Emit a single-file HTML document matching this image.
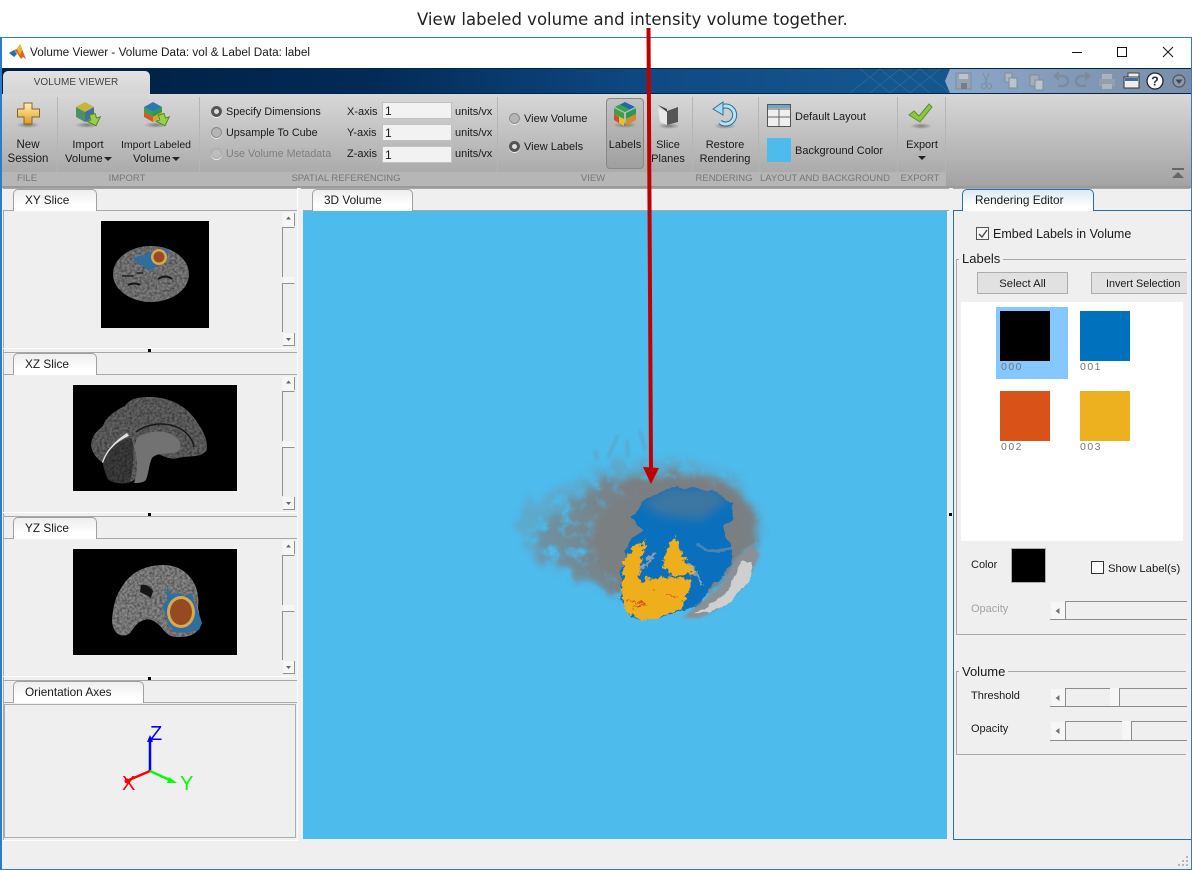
<!DOCTYPE html>
<html><head><meta charset="utf-8"><style>
html,body{margin:0;padding:0;background:#fff}
#p{position:relative;width:1192px;height:870px;overflow:hidden;background:#fff;font-family:"Liberation Sans",sans-serif;font-size:11px;color:#1a1a1a}
#p div{position:absolute;box-sizing:border-box}
.t{white-space:nowrap;line-height:14px;height:14px}
.c{transform:translateX(-50%);text-align:center}
.s{color:#777;font-size:9.500px}
.tab{z-index:2;background:linear-gradient(#eeeeee,#ffffff 75%);border:1px solid #a0a0a0;border-bottom:none;border-radius:5px 5px 0 0;height:22px;font-size:11.800px;line-height:20px;padding-left:11px;white-space:nowrap}
.line{background:#a8a8a8}
.sep{background:#b5b5b5;width:1px;top:97px;height:89px}
.in{background:#f2f2f2;border:1px solid #c0c0c0;width:70px;height:17px;line-height:16px;padding-left:2px;font-size:12px}
.rad{width:11px;height:11px;border-radius:50%;background:#b5b5b5;border:1px solid #8a8a8a;box-shadow:0 1px 0 #eee}
.rad.on{background:#ddd;border:3px solid #555}
</style></head><body><div id="p">

<div class="t" style="left:417px;top:10px;font:16.500px/20px 'DejaVu Sans',sans-serif;height:20px;color:#222">View labeled volume and intensity volume together.</div>

<div style="left:0;top:37px;width:1192px;height:833px;background:#efefef;border:1px solid #2b7cc9;border-width:1px 1px 1px 2px"></div>
<div style="left:2px;top:38px;width:1189px;height:30px;background:#fff"></div>
<svg style="position:absolute;left:9px;top:44px" width="18" height="16" viewBox="0 0 18 16"><path d="M0 9l5-3 3 4-3 3z" fill="#2a6cae"/><path d="M5 6l3-1 3-5 6 15-3-2-2 2-4-6z" fill="#d9681c"/><path d="M8 5l3-5 2 6-2 5z" fill="#f1b62a"/></svg>
<div class="t" style="left:30px;top:46px;font-size:11.750px">Volume Viewer - Volume Data: vol &amp; Label Data: label</div>
<svg style="position:absolute;left:1065px;top:44px" width="115" height="16"><path d="M7 8.500h10" stroke="#111" fill="none"/><rect x="52.500" y="3.500" width="9" height="9" stroke="#111" fill="none"/><path d="M98 3l10 10M108 3l-10 10" stroke="#111" fill="none"/></svg>

<div style="left:2px;top:68px;width:1189px;height:26px;background:linear-gradient(90deg,#001f3f 0,#012a55 30%,#0f4a85 55%,#15568f 75%,#15568f 100%);border-top:1px solid #012447;border-bottom:1px solid #012447"></div>
<svg style="position:absolute;left:850px;top:69px" width="110" height="24" opacity=".18"><path d="M0 24L30 0M20 24L50 0M40 24L70 0M60 24L90 0M10 0L40 24M30 0L60 24M50 0L80 24M70 0L100 24" stroke="#7fa8d0" fill="none"/></svg>
<svg style="position:absolute;left:943px;top:69px" width="248" height="24">
<defs><linearGradient id="qb" x1="0" x2="1" y1="0" y2="0"><stop offset="0" stop-color="#8ba8c9"/><stop offset="1" stop-color="#7a8da6"/></linearGradient></defs>
<path d="M7 0H248V24H7L2 12z" fill="url(#qb)"/>
<g opacity=".8"><rect x="13" y="4" width="15" height="16" fill="#9aa4ae" stroke="#7d8892"/><rect x="16" y="5" width="9" height="5" fill="#c4ccd3"/><rect x="18" y="14" width="6" height="6" fill="#6c7781"/>
<path d="M40 4l4 10M46 4l-4 10" stroke="#7d8892" fill="none"/><circle cx="41" cy="17" r="2.500" fill="none" stroke="#7d8892"/><circle cx="46" cy="17" r="2.500" fill="none" stroke="#7d8892"/>
<rect x="62" y="4" width="7" height="9" fill="#b6bec6" stroke="#7d8892"/><rect x="66" y="9" width="8" height="10" fill="#c8ced4" stroke="#7d8892"/>
<rect x="87" y="6" width="9" height="11" fill="#aab2ba" stroke="#7d8892"/><rect x="92" y="11" width="8" height="10" fill="#c8ced4" stroke="#7d8892"/>
<path d="M114 7h6a5 5 0 0 1 0 10h-5" stroke="#7d8892" stroke-width="2.500" fill="none"/><path d="M116 2l-6 5 6 5z" fill="#7d8892"/>
<path d="M144 7h-6a5 5 0 0 0 0 10h5" stroke="#7d8892" stroke-width="2.500" fill="none"/><path d="M142 2l6 5-6 5z" fill="#7d8892"/>
<rect x="159" y="5" width="10" height="5" fill="#b4bcc4"/><rect x="156" y="10" width="16" height="7" fill="#98a2ac"/><rect x="159" y="15" width="10" height="5" fill="#b8c0c8"/></g>
<rect x="185" y="4" width="11" height="9" fill="#eee" stroke="#444"/><rect x="181" y="8" width="15" height="11" fill="#eee" stroke="#333"/><rect x="182" y="9" width="13" height="3" fill="#3f6f9e"/>
</svg>
<svg style="position:absolute;left:1145px;top:70px" width="44" height="22"><circle cx="10" cy="11" r="8" fill="#fff" stroke="#223" stroke-width="1.300"/><text x="10" y="15.500" text-anchor="middle" font-family="Liberation Sans" font-weight="bold" font-size="12.500" fill="#1d2c4a">?</text><circle cx="34" cy="11" r="6" fill="#8b9aa9" stroke="#4b5560" stroke-width="1.200"/><path d="M30.500 9.500h7l-3.500 4.500z" fill="#3d4650"/></svg>

<div style="left:3px;top:71px;width:147px;height:24px;background:linear-gradient(#e2e2e2,#d4d4d4);border-radius:5px 5px 0 0"></div>
<div class="t c" style="left:76px;top:76px;color:#444;font-size:10px">VOLUME VIEWER</div>

<div style="left:2px;top:94px;width:1189px;height:92px;background:linear-gradient(#d8d8d8,#a3a3a3)"></div>
<div style="left:2px;top:172px;width:943px;height:14px;background:#b6b6b6"></div>
<div style="left:2px;top:186px;width:1189px;height:2px;background:#9a9a9a"></div>
<div class="sep" style="left:57px"></div><div class="sep" style="left:199px"></div><div class="sep" style="left:497px"></div><div class="sep" style="left:692px"></div><div class="sep" style="left:758px"></div><div class="sep" style="left:897px"></div><div class="sep" style="left:945px"></div>

<svg style="position:absolute;left:15px;top:100px" width="28" height="30"><defs><linearGradient id="gp" x1="0" y1="0" x2="0" y2="1"><stop offset="0" stop-color="#fff2b8"/><stop offset="1" stop-color="#e09a20"/></linearGradient><radialGradient id="sh"><stop offset="0" stop-color="#555" stop-opacity=".65"/><stop offset="1" stop-color="#555" stop-opacity="0"/></radialGradient></defs><ellipse cx="13" cy="25" rx="12" ry="3" fill="url(#sh)"/><path d="M9 3h8v6h7.500v8H17v7H9v-7H2.500V9H9z" fill="url(#gp)" stroke="#8a6420"/></svg>

<svg style="position:absolute;left:73px;top:100px" width="30" height="30"><ellipse cx="14" cy="25" rx="12" ry="3" fill="url(#sh)"/><path d="M3 7l9-5 9 5-9 5z" fill="#c9b33a"/><path d="M3 7v10l9 5V12z" fill="#4e8f63"/><path d="M21 7v10l-9 5V12z" fill="#3b71a8"/><path d="M18 14v5h-4l7 7 7-7h-4v-5z" transform="rotate(-18 21 20)" fill="#9bd04a" stroke="#4f8a20"/></svg>
<svg style="position:absolute;left:142px;top:100px" width="30" height="30"><ellipse cx="14" cy="25" rx="12" ry="3" fill="url(#sh)"/><path d="M2 7l9-5 9 5-9 5z" fill="#2a78b5"/><path d="M2 7v5l9 5v-5z" fill="#3ca04a"/><path d="M2 12v5l9 5v-5z" fill="#d8542a"/><path d="M20 7v5l-9 5v-5z" fill="#2a9a4f"/><path d="M20 12v5l-9 5v-5z" fill="#d7a528"/><path d="M18 14v5h-4l7 7 7-7h-4v-5z" transform="rotate(-18 21 20)" fill="#9bd04a" stroke="#4f8a20"/></svg>

<div class="t c" style="left:28px;top:138px;font-size:11.500px">New</div><div class="t c" style="left:28px;top:152px;font-size:11.500px">Session</div>
<div class="t c" style="left:88px;top:138px">Import</div><div class="t" style="left:65px;top:152px;font-size:11.300px">Volume</div>
<div class="t c" style="left:156px;top:138px;font-size:10.500px">Import Labeled</div><div class="t" style="left:133px;top:152px;font-size:11.300px">Volume</div>
<svg style="position:absolute;left:100px;top:156px" width="80" height="6"><path d="M4 1h8l-4 4zM72 1h8l-4 4z" fill="#222"/></svg>

<div class="rad on" style="left:211px;top:106px"></div><div class="rad" style="left:211px;top:127px"></div><div class="rad" style="left:211px;top:148px;background:#bdbdbd;border-color:#aaa"></div>
<div class="t" style="left:226px;top:105px;font-size:10.800px">Specify Dimensions</div>
<div class="t" style="left:226px;top:126px;font-size:10.800px">Upsample To Cube</div>
<div class="t" style="left:226px;top:147px;color:#7f7f7f;font-size:10.700px">Use Volume Metadata</div>
<div class="t" style="left:347px;top:105px">X-axis</div><div class="t" style="left:347px;top:126px">Y-axis</div><div class="t" style="left:347px;top:147px">Z-axis</div>
<div class="in" style="left:382px;top:102px">1</div><div class="in" style="left:382px;top:124px">1</div><div class="in" style="left:382px;top:146px">1</div>
<div class="t" style="left:455px;top:105px">units/vx</div><div class="t" style="left:455px;top:126px">units/vx</div><div class="t" style="left:455px;top:147px">units/vx</div>

<div class="rad" style="left:509px;top:113px"></div><div class="rad on" style="left:509px;top:141px"></div>
<div class="t" style="left:524px;top:112px">View Volume</div><div class="t" style="left:524px;top:140px">View Labels</div>
<div style="left:606px;top:98px;width:38px;height:71px;background:linear-gradient(#c2c2c2,#a0a0a0);border:1px solid #888;border-radius:4px"></div>
<svg style="position:absolute;left:611px;top:100px" width="30" height="30"><ellipse cx="14" cy="25" rx="12" ry="3" fill="url(#sh)"/><path d="M14 2l10 5-10 5-10-5z" fill="#1f68ae"/><path d="M4 7l5-2.500 10 5L14 12z" fill="#3aa248"/><path d="M3 8v6l10 5v-6z" fill="#3aa248"/><path d="M3 14v6l5 3v-6z" fill="#d84a2a"/><path d="M8 17v6l5 3v-7z" fill="#e8c22a"/><path d="M25 8v6l-10 5v-6z" fill="#2a9a4f"/><path d="M25 14v6l-10 6v-7z" fill="#d88a2a"/></svg>
<div class="t c" style="left:625px;top:138px">Labels</div>
<svg style="position:absolute;left:656px;top:103px" width="26" height="28"><ellipse cx="13" cy="23" rx="11" ry="3" fill="url(#sh)"/><path d="M2 5l9 3v14l-7-3z" fill="#e8e8e8"/><path d="M2 2l9 4v3z" fill="#444"/><path d="M11 8l11-4v15l-11 3z" fill="#555"/></svg>
<div class="t c" style="left:668px;top:138px">Slice</div><div class="t c" style="left:668px;top:152px">Planes</div>
<svg style="position:absolute;left:711px;top:101px" width="30" height="30"><ellipse cx="14" cy="25" rx="11" ry="3" fill="url(#sh)"/><path d="M9 7A9 9 0 1 1 9 21" stroke="#2f6f9a" stroke-width="5" fill="none"/><path d="M9 7A9 9 0 1 1 9 21" stroke="#b7e3f5" stroke-width="3" fill="none"/><path d="M2 8L12 1V14z" fill="#a7dcf2" stroke="#2f6f9a"/></svg>
<div class="t c" style="left:725px;top:138px">Restore</div><div class="t c" style="left:725px;top:152px">Rendering</div>

<svg style="position:absolute;left:767px;top:104px" width="25" height="24"><rect x=".5" y=".5" width="23" height="22" fill="#efefef" stroke="#555"/><rect x="1" y="1" width="22" height="3" fill="#6fa6cf"/><path d="M1 5h23M1 13h23M12 5v17" stroke="#666" fill="none"/></svg>
<div class="t" style="left:795px;top:110px">Default Layout</div>
<div style="left:767px;top:138px;width:24px;height:24px;background:#4dbbec"></div>
<div class="t" style="left:795px;top:144px">Background Color</div>

<svg style="position:absolute;left:907px;top:103px" width="30" height="28"><ellipse cx="14" cy="23" rx="11" ry="3" fill="url(#sh)"/><path d="M2 12l5-4 5 5L22 1l3 3-12 15z" fill="#8cc63f" stroke="#5f8f2a"/></svg>
<div class="t c" style="left:922px;top:138px">Export</div>
<svg style="position:absolute;left:918px;top:155px" width="9" height="6"><path d="M0 1h8l-4 4z" fill="#222"/></svg>
<svg style="position:absolute;left:1171px;top:167px" width="14" height="12"><rect x="1" y="1" width="12" height="2" fill="#666"/><path d="M1 11l6-6 6 6z" fill="#666"/></svg>

<div class="t c s" style="left:27px;top:172px">FILE</div><div class="t c s" style="left:127px;top:172px">IMPORT</div><div class="t c s" style="left:346px;top:172px">SPATIAL REFERENCING</div><div class="t c s" style="left:593px;top:172px">VIEW</div><div class="t c s" style="left:724px;top:172px">RENDERING</div><div class="t c s" style="left:825px;top:172px">LAYOUT AND BACKGROUND</div><div class="t c s" style="left:920px;top:172px">EXPORT</div>

<!-- left frame -->
<div style="left:3px;top:210px;width:1px;height:630px;background:#a8a8a8"></div>
<div style="left:297px;top:188px;width:1px;height:653px;background:#fff"></div>
<div style="left:3px;top:840px;width:294px;height:1px;background:#fff"></div>
<div class="line" style="left:3px;top:188px;width:294px;height:1px"></div>
<div class="line" style="left:301px;top:188px;width:648px;height:1px"></div>
<div class="line" style="left:953px;top:188px;width:237px;height:1px"></div>
<div class="line" style="left:3px;top:210px;width:294px;height:1px"></div>
<div class="line" style="left:3px;top:352px;width:294px;height:1px"></div><div class="line" style="left:3px;top:374px;width:294px;height:1px"></div>
<div class="line" style="left:3px;top:516px;width:294px;height:1px"></div><div class="line" style="left:3px;top:538px;width:294px;height:1px"></div>
<div class="line" style="left:3px;top:680px;width:294px;height:1px"></div><div class="line" style="left:3px;top:702px;width:294px;height:1px"></div>
<div class="tab" style="left:13px;top:189px;width:84px">XY Slice</div>
<div class="tab" style="left:13px;top:353px;width:84px">XZ Slice</div>
<div class="tab" style="left:13px;top:517px;width:84px">YZ Slice</div>
<div class="tab" style="left:13px;top:681px;width:131px">Orientation Axes</div>
<div style="left:3px;top:348px;width:294px;height:1px;background:#fff"></div><div style="left:3px;top:512px;width:294px;height:1px;background:#fff"></div><div style="left:3px;top:676px;width:294px;height:1px;background:#fff"></div>
<div style="left:148px;top:349px;width:3px;height:3px;background:#000"></div><div style="left:148px;top:513px;width:3px;height:3px;background:#000"></div><div style="left:148px;top:677px;width:3px;height:3px;background:#000"></div><div style="left:949px;top:513px;width:3px;height:3px;background:#000"></div>
<div style="left:4px;top:704px;width:292px;height:134px;border:1px solid #adadad"></div>

<!-- scroll bars -->
<svg style="position:absolute;left:280px;top:210px" width="17" height="470" fill="none">
<g><rect x="2.500" y="2.500" width="12" height="14" fill="#f6f6f6"/><path d="M6 9.500h5l-2.500-3z" fill="#666"/><path d="M14.500 3V16" stroke="#909090"/><path d="M2.500 67V17.500H14.500" stroke="#909090"/><rect x="3" y="67" width="12" height="6" fill="#f6f6f6"/><path d="M2.500 122V73.500H14.500" stroke="#909090"/><rect x="3" y="123" width="12" height="13" fill="#f6f6f6"/><path d="M3 135.500H14.500V123" stroke="#909090"/><path d="M6 128h5l-2.500 3z" fill="#666"/></g>
<g transform="translate(0,164)"><rect x="2.500" y="2.500" width="12" height="14" fill="#f6f6f6"/><path d="M6 9.500h5l-2.500-3z" fill="#666"/><path d="M14.500 3V16" stroke="#909090"/><path d="M2.500 67V17.500H14.500" stroke="#909090"/><rect x="3" y="67" width="12" height="6" fill="#f6f6f6"/><path d="M2.500 122V73.500H14.500" stroke="#909090"/><rect x="3" y="123" width="12" height="13" fill="#f6f6f6"/><path d="M3 135.500H14.500V123" stroke="#909090"/><path d="M6 128h5l-2.500 3z" fill="#666"/></g>
<g transform="translate(0,328)"><rect x="2.500" y="2.500" width="12" height="14" fill="#f6f6f6"/><path d="M6 9.500h5l-2.500-3z" fill="#666"/><path d="M14.500 3V16" stroke="#909090"/><path d="M2.500 67V17.500H14.500" stroke="#909090"/><rect x="3" y="67" width="12" height="6" fill="#f6f6f6"/><path d="M2.500 122V73.500H14.500" stroke="#909090"/><rect x="3" y="123" width="12" height="13" fill="#f6f6f6"/><path d="M3 135.500H14.500V123" stroke="#909090"/><path d="M6 128h5l-2.500 3z" fill="#666"/></g>
</svg>

<!-- slices -->
<svg style="position:absolute;left:0;top:190px" width="300" height="490" viewBox="0 190 300 490">
<defs>
<filter id="tx" x="-5%" y="-5%" width="110%" height="110%" color-interpolation-filters="sRGB"><feTurbulence type="fractalNoise" baseFrequency=".4" numOctaves="2" seed="4" result="n"/><feColorMatrix in="n" values="0 0 0 0 0 0 0 0 0 0 0 0 0 0 0 .9 0 0 0 -.3" result="d"/><feComposite in="d" in2="SourceAlpha" operator="in" result="m"/><feMerge><feMergeNode in="SourceGraphic"/><feMergeNode in="m"/></feMerge></filter>
</defs>
<rect x="101" y="221" width="108" height="107" fill="#000"/>
<ellipse cx="151" cy="274" rx="38" ry="28" fill="#7e7e7e" filter="url(#tx)"/>
<path d="M158 279c5-3 10-3 14 0M128 285c4-2 9-2 12 0" stroke="#161616" stroke-width="2" fill="none"/>
<path d="M122 276h12M137 273h6" stroke="#222" stroke-width="1.500" fill="none"/>
<path d="M133 258l16-5 12-5 8 2-2 9-8 5-7 6-6-1-4-4-7-4z" fill="#2f6f9f"/>
<ellipse cx="159" cy="257" rx="8" ry="8" fill="#d8a94e"/><ellipse cx="159" cy="257" rx="5.500" ry="5.500" fill="#9a4a20"/>

<rect x="73" y="385" width="164" height="106" fill="#000"/>
<path d="M91 445c1-10 6-14 12-19 2-6 7-13 22-20 5-8 15-9 25-9 18 0 35 8 45 22 6 9 12 17 12 28 0 5-3 6-7 8-6 2-14 1-22 3-7 2-12-1-18-3-3-4-10-3-10 1-1 7-4 12-8 14-3 5-6 10-12 12-8 2-18-1-21-7-4-3-5-8-6-12-6-4-11-10-12-18z" fill="#646464" filter="url(#tx)"/>
<path d="M136 432c12-9 30-11 45-3 8 5 12 12 13 18" stroke="#181818" stroke-width="1.500" fill="none"/>
<path d="M137 438c14-9 32-9 42 2 3 6 2 12-6 13-10 1-16 0-21 5-3 6-3 14-6 22-3 3-8 3-12 3 4-12 4-24 0-36z" fill="#727272"/>
<path d="M102 462c4-12 14-22 25-29l2 3c-12 5-21 14-26 27z" fill="#e0e0e0"/>
<path d="M103 464c4-14 14-24 28-26 3 4 3 14 2 24 0 8-2 16-4 21-10 1-20 0-22-6-2-4-3-8-4-13z" fill="#3e3e3e" filter="url(#tx)"/>

<rect x="73" y="549" width="164" height="106" fill="#000"/>
<path d="M112 620c1-12 3-22 8-30 6-11 14-19 28-23 12-3 24-3 34 3 12 8 18 21 16 38 2 6 2 14 0 22-4 5-10 7-18 7-8 1-14-3-18-9-4-5-12-11-18-8-7 2-10 8-14 13-5 4-11 3-14-1-3-4-4-8-4-12z" fill="#888" filter="url(#tx)"/>
<path d="M141 585c5-1 10 2 12 6l-2 7-5-3-6-3z" fill="#161616"/>
<path d="M167 586l4 8 8-1 5 3 8-3 2 9 5 12 3 9-3 7-9 2-14 1-8-8-3-12-3-6 5-7z" fill="#2f6f9f"/>
<ellipse cx="181" cy="612" rx="14" ry="16" fill="#d8a94e"/><ellipse cx="181" cy="612" rx="11" ry="13" fill="#964a22"/>
</svg>

<!-- orientation axes -->
<svg style="position:absolute;left:110px;top:715px" width="90" height="90" font-family="Liberation Sans" font-size="20">
<path d="M40 56V23" stroke="#00f" stroke-width="2.500"/><path d="M37 27l3-7 3 7z" fill="#00f"/>
<path d="M40 56L19 65" stroke="#f00" stroke-width="2.500"/><circle cx="17" cy="66" r="2.500" fill="#f00"/>
<path d="M40 56L62 66" stroke="#0f0" stroke-width="2.500"/><path d="M59 62l8 6-10 0z" fill="#0f0"/>
<text x="40" y="25" fill="#00f">Z</text><text x="12" y="75" fill="#f00">X</text><text x="70" y="75" fill="#0f0">Y</text>
</svg>

<!-- 3D volume -->
<div class="line" style="left:303px;top:210px;width:646px;height:1px"></div>
<div class="tab" style="left:312px;top:189px;width:101px">3D Volume</div>
<div style="left:303px;top:211px;width:644px;height:628px;background:#4dbbec"></div>
<svg style="position:absolute;left:303px;top:211px" width="644" height="628" viewBox="303 211 644 628">
<defs>
<linearGradient id="gg" gradientUnits="userSpaceOnUse" x1="525" y1="0" x2="625" y2="0"><stop offset="0" stop-color="#7a8084" stop-opacity=".45"/><stop offset="1" stop-color="#7a7f82"/></linearGradient>
<filter id="wisp" x="-20%" y="-20%" width="140%" height="140%" color-interpolation-filters="sRGB"><feTurbulence type="fractalNoise" baseFrequency=".075" numOctaves="4" seed="7" result="n"/><feDisplacementMap in="SourceGraphic" in2="n" scale="26" xChannelSelector="R" yChannelSelector="G" result="d"/><feGaussianBlur in="d" stdDeviation="3.500" result="b"/><feColorMatrix in="n" values="0 0 0 0 0 0 0 0 0 0 0 0 0 0 0 3 0 0 0 -.55" result="na"/><feComposite in="b" in2="na" operator="in"/></filter>
<filter id="rag2" x="-20%" y="-20%" width="140%" height="140%" color-interpolation-filters="sRGB"><feTurbulence type="fractalNoise" baseFrequency=".09" numOctaves="3" seed="3"/><feDisplacementMap in="SourceGraphic" scale="7" xChannelSelector="R" yChannelSelector="G"/></filter>
<filter id="rag3" x="-20%" y="-20%" width="140%" height="140%" color-interpolation-filters="sRGB"><feTurbulence type="fractalNoise" baseFrequency=".2" numOctaves="3" seed="11"/><feDisplacementMap in="SourceGraphic" scale="9" xChannelSelector="R" yChannelSelector="G"/></filter>
<filter id="bl" x="-30%" y="-30%" width="160%" height="160%"><feGaussianBlur stdDeviation="5"/></filter>
<filter id="bs" x="-50%" y="-50%" width="200%" height="200%"><feGaussianBlur stdDeviation="1.200"/></filter>
</defs>
<path d="M513 523L533 500 580 480 607 462 650 455 700 462 733 478 757 512 760 540 745 560 700 590 610 585 583 578 557 572 535 560z" fill="#6b98ae" opacity=".5" filter="url(#wisp)"/>
<path d="M618 435L608 457M640 430L645 450M627 440L628 457M595 450L597 460" stroke="#6b8ea2" stroke-width="2.500" opacity=".5" fill="none" filter="url(#bs)"/>
<path d="M535 530L567 503 607 480 650 475 700 475 733 483 757 517 758 540 747 552 720 585 650 605 610 590 583 577 557 569 540 557z" fill="url(#gg)" filter="url(#wisp)"/>
<path d="M595 510L640 482 700 478 735 490 752 520 750 545 700 590 640 590 610 580 590 550z" fill="#7a7f82" filter="url(#bl)"/>
<path d="M632 517L647 497 673 487 713 490 733 503 732 520 722 527 730 543 733 563 720 580 707 590 697 607 673 613 650 620 630 617 620 597 622 567 630 543 643 530z" fill="#0a70bd" filter="url(#rag2)"/>
<path d="M640 502L668 487 713 488 730 500 700 520 660 515z" fill="#7a7f82" opacity=".45" filter="url(#bl)"/>
<path d="M697 544C710 550 722 555 733 548" stroke="#6a8fa8" stroke-width="3" opacity=".7" fill="none" filter="url(#rag2)"/>
<path d="M682 618L700 603 722 585 735 560 752 545 760 555 745 585 725 605 700 618z" fill="#8a9096" filter="url(#bs)"/>
<path d="M695 612L707 608 730 587 743 560 752 560 747 583 730 603 707 613z" fill="#cfcfcf" filter="url(#rag2)"/>
<path d="M620 597L623 587 643 580 667 577 692 580 687 597 680 610 660 617 643 620 627 613zM623 563L633 547 647 540 640 563 640 583 623 587zM667 547L675 537 683 557 697 573 673 577 663 567z" fill="#efaf1d" filter="url(#rag3)"/>
<path d="M640 570L656 552M688 562L702 585" stroke="#a9a9a9" stroke-width="3" opacity=".8" fill="none" filter="url(#rag3)"/>
<path d="M625 600l20 4M632 608l14-3M652 590h3M668 594l10 4" stroke="#d95319" stroke-width="1.200" fill="none" filter="url(#rag3)"/>
</svg>
<svg style="position:absolute;left:640px;top:26px" width="24" height="462"><path d="M8.500 2L11 445" stroke="#c00000" stroke-width="4" fill="none"/><path d="M3 441l16 1-8 16z" fill="#c00000"/></svg>

<!-- right panel -->
<div style="left:953px;top:210px;width:238px;height:630px;border-left:1px solid #2c6ea8;border-top:1px solid #2c6ea8;border-bottom:1px solid #2c6ea8"></div>
<div class="tab" style="left:962px;top:189px;width:132px;border-color:#2c6ea8;background:linear-gradient(#dce9f4,#ffffff 80%);padding-left:12px">Rendering Editor</div>
<div style="left:976px;top:227px;width:13px;height:13px;background:#f6f6f6;border:1px solid #555"></div>
<svg style="position:absolute;left:977px;top:228px" width="12" height="12"><path d="M2 6l3 3 5-7" stroke="#444" stroke-width="1.300" fill="none"/></svg>
<div class="t" style="left:993px;top:227px;font-size:12.500px">Embed Labels in Volume</div>
<div class="line" style="left:956px;top:259px;width:230px;height:1px"></div><div class="line" style="left:956px;top:259px;width:1px;height:376px"></div><div class="line" style="left:956px;top:634px;width:230px;height:1px"></div>
<div class="t" style="left:959px;top:252px;background:#efefef;padding:0 3px;font-size:13px">Labels</div>
<div style="left:977px;top:272px;width:91px;height:22px;background:#e1e1e1;border:1px solid #adadad;text-align:center;line-height:23px;font-size:11.300px">Select All</div>
<div style="left:1091px;top:272px;width:96px;height:22px;background:#e1e1e1;border:1px solid #adadad;border-right:none;padding-left:14px;line-height:23px;font-size:10.800px;white-space:nowrap">Invert Selection</div>
<div style="left:961px;top:302px;width:222px;height:239px;background:#fff"></div>
<div style="left:996px;top:307px;width:72px;height:72px;background:#85c7ff"></div>
<div style="left:1000px;top:311px;width:50px;height:50px;background:#000"></div>
<div style="left:1080px;top:311px;width:50px;height:50px;background:#0072bd"></div>
<div style="left:1000px;top:391px;width:50px;height:50px;background:#d95319"></div>
<div style="left:1080px;top:391px;width:50px;height:50px;background:#edb120"></div>
<div class="t" style="left:1001px;top:360px;font-size:10.500px;letter-spacing:1.500px;color:#777">000</div>
<div class="t" style="left:1080px;top:360px;font-size:10.500px;letter-spacing:1.500px;color:#777">001</div>
<div class="t" style="left:1001px;top:440px;font-size:10.500px;letter-spacing:1.500px;color:#777">002</div>
<div class="t" style="left:1080px;top:440px;font-size:10.500px;letter-spacing:1.500px;color:#777">003</div>
<div class="t" style="left:971px;top:558px">Color</div>
<div style="left:1011px;top:548px;width:35px;height:35px;background:#000;border:1px solid #adadad"></div>
<div style="left:1091px;top:561px;width:13px;height:13px;background:#fff;border:1px solid #333"></div>
<div class="t" style="left:1108px;top:562px;font-size:11.300px">Show Label(s)</div>
<div class="t" style="left:971px;top:602px;color:#a3a3a3">Opacity</div>
<div class="t" style="left:971px;top:689px">Threshold</div>
<div class="t" style="left:971px;top:722px">Opacity</div>
<svg style="position:absolute;left:1050px;top:600px" width="137" height="145" fill="none">
<g><rect x="1" y="2" width="14" height="17" fill="#f6f6f6"/><path d="M9.500 8v6l-4-3z" fill="#777"/><path d="M0 19.500H137M15.500 19V1.500H137" stroke="#8c8c8c"/></g>
<g transform="translate(0,87)"><rect x="1" y="2" width="14" height="17" fill="#f6f6f6"/><path d="M9.500 8v6l-4-3z" fill="#777"/><path d="M0 19.500H137M15.500 19V1.500H137" stroke="#8c8c8c"/><rect x="60" y="1" width="9" height="18" fill="#f6f6f6"/><path d="M69.500 1V20" stroke="#8c8c8c"/></g>
<g transform="translate(0,120)"><rect x="1" y="2" width="14" height="18" fill="#f6f6f6"/><path d="M9.500 8v6l-4-3z" fill="#777"/><path d="M0 20.500H137M15.500 20V1.500H137" stroke="#8c8c8c"/><rect x="72" y="1" width="9" height="19" fill="#f6f6f6"/><path d="M81.500 1V21" stroke="#8c8c8c"/></g>
</svg>
<div class="line" style="left:956px;top:671px;width:230px;height:1px"></div><div class="line" style="left:956px;top:671px;width:1px;height:84px"></div><div class="line" style="left:956px;top:754px;width:230px;height:1px"></div>
<div class="t" style="left:959px;top:665px;background:#efefef;padding:0 3px;font-size:13px">Volume</div>

<svg style="position:absolute;left:1176px;top:855px" width="14" height="13"><g fill="#b5b5b5"><rect x="10" y="1" width="2" height="2"/><rect x="6" y="5" width="2" height="2"/><rect x="10" y="5" width="2" height="2"/><rect x="2" y="9" width="2" height="2"/><rect x="6" y="9" width="2" height="2"/><rect x="10" y="9" width="2" height="2"/></g></svg>
</div></body></html>
